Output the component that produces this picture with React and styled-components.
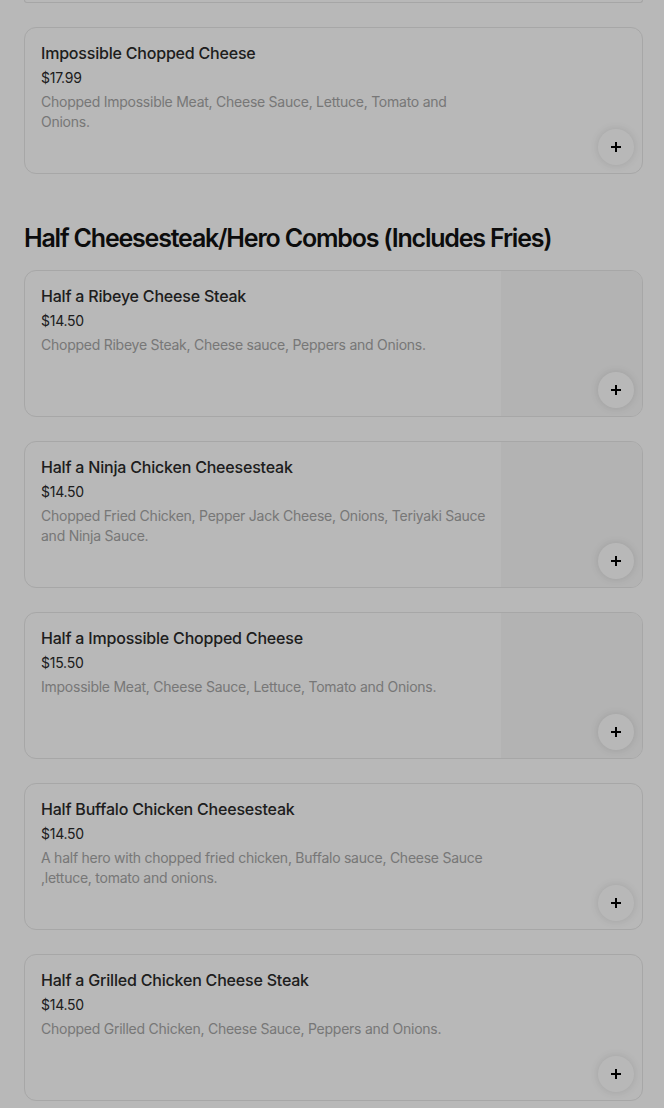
import styled, { createGlobalStyle } from "styled-components";

const GlobalStyle = createGlobalStyle`
  html, body {
    margin: 0;
    padding: 0;
    background: #fff;
  }
  body {
    font-family: Inter, "Liberation Sans", sans-serif;
    color: #000;
    overflow: hidden;
  }
`;

const Page = styled.div`
  width: 664px;
  height: 1108px;
  overflow: hidden;
  padding: 0 21px 0 24px;
  box-sizing: border-box;
`;

const Stub = styled.div`
  height: 2px;
  border: 1px solid #e6e6e6;
  border-top: none;
  border-radius: 0 0 12px 12px;
`;

const List = styled.div`
  display: flex;
  flex-direction: column;
  gap: 24px;
  margin-top: ${(p) => (p.$first ? "24px" : "0")};
`;

const SectionTitle = styled.h2`
  margin: 48px 0 16px;
  font-size: 25px;
  line-height: 32px;
  font-weight: 600;
  letter-spacing: -1.2px;
  color: #111;
`;

const Card = styled.div`
  position: relative;
  display: grid;
  grid-template-columns: 1fr 141px;
  height: 147px;
  box-sizing: border-box;
  border: 1px solid #e8e8e8;
  border-radius: 12px;
  overflow: hidden;
  background: #fff;
`;

const Info = styled.div`
  padding: 13px 8px 0 16px;
  display: flex;
  flex-direction: column;
`;

const Name = styled.div`
  font-size: 16px;
  line-height: 24px;
  font-weight: 500;
  letter-spacing: -0.2px;
  color: #2a2a2a;
`;

const Price = styled.div`
  margin-top: 3px;
  font-size: 14px;
  line-height: 20px;
  letter-spacing: -0.25px;
  color: #2a2a2a;
`;

const Desc = styled.div`
  margin-top: 4px;
  font-size: 14px;
  line-height: 20px;
  letter-spacing: -0.25px;
  color: #a6a6a6;
`;

const Thumb = styled.div`
  background: ${(p) => (p.$loading ? "#f8f8f8" : "transparent")};
`;

const AddButton = styled.button`
  position: absolute;
  right: 8px;
  bottom: 8px;
  width: 36px;
  height: 36px;
  border: none;
  border-radius: 50%;
  background: #fff;
  box-shadow: 0 0 8px rgba(0, 0, 0, 0.12);
  display: flex;
  align-items: center;
  justify-content: center;
  padding: 0;
`;

const Backdrop = styled.div`
  position: fixed;
  inset: 0;
  background: rgba(0, 0, 0, 0.28);
`;

const Plus = () => (
  <svg width="12" height="12" viewBox="0 0 12 12">
    <path d="M6 1v10M1 6h10" stroke="#000" strokeWidth="2" />
  </svg>
);

const combos = [
  {
    name: "Half a Ribeye Cheese Steak",
    price: "$14.50",
    desc: "Chopped Ribeye Steak, Cheese sauce, Peppers and Onions.",
    img: true,
  },
  {
    name: "Half a Ninja Chicken Cheesesteak",
    price: "$14.50",
    desc: "Chopped Fried Chicken, Pepper Jack Cheese, Onions, Teriyaki Sauce and Ninja Sauce.",
    img: true,
  },
  {
    name: "Half a Impossible Chopped Cheese",
    price: "$15.50",
    desc: "Impossible Meat, Cheese Sauce, Lettuce, Tomato and Onions.",
    img: true,
  },
  {
    name: "Half Buffalo Chicken Cheesesteak",
    price: "$14.50",
    desc: "A half hero with chopped fried chicken, Buffalo sauce, Cheese Sauce ,lettuce, tomato and onions.",
  },
  {
    name: "Half a Grilled Chicken Cheese Steak",
    price: "$14.50",
    desc: "Chopped Grilled Chicken, Cheese Sauce, Peppers and Onions.",
  },
];

function Item({ item }) {
  return (
    <Card>
      <Info>
        <Name>{item.name}</Name>
        <Price>{item.price}</Price>
        <Desc>{item.desc}</Desc>
      </Info>
      <Thumb $loading={item.img} />
      <AddButton aria-label="Add">
        <Plus />
      </AddButton>
    </Card>
  );
}

export default function App() {
  return (
    <>
      <GlobalStyle />
      <Page>
        <Stub />
        <List $first>
          <Item
            item={{
              name: "Impossible Chopped Cheese",
              price: "$17.99",
              desc: "Chopped Impossible Meat, Cheese Sauce, Lettuce, Tomato and Onions.",
            }}
          />
        </List>
        <SectionTitle>Half Cheesesteak/Hero Combos (Includes Fries)</SectionTitle>
        <List>
          {combos.map((c) => (
            <Item key={c.name} item={c} />
          ))}
        </List>
      </Page>
      <Backdrop />
    </>
  );
}
